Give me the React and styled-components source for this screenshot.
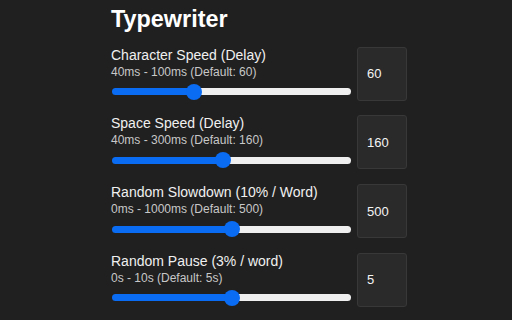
import React, { useState } from 'react';
import styled, { createGlobalStyle } from 'styled-components';

const GlobalStyle = createGlobalStyle`
  html, body {
    margin: 0;
    padding: 0;
    background: #202020;
  }
  body {
    font-family: "Liberation Sans", Arial, sans-serif;
    color: #f0f0f0;
  }
`;

const Page = styled.div`
  width: 296px;
  margin-left: 111px;
  padding-top: 6px;
  display: flex;
  flex-direction: column;
  gap: 14.7px;
`;

const Title = styled.h1`
  margin: 0;
  font-size: 23.4px;
  line-height: 26px;
  font-weight: bold;
  color: #ffffff;
`;

const Row = styled.div`
  display: grid;
  grid-template-columns: 1fr 50px;
  column-gap: 6px;
  height: 54px;
`;

const Info = styled.div`
  display: flex;
  flex-direction: column;
`;

const Label = styled.div`
  font-size: 14px;
  line-height: 16px;
  color: #f0f0f0;
`;

const Range = styled.div`
  margin-top: 2px;
  font-size: 12px;
  line-height: 14px;
  color: #c8c8c8;
`;

const Slider = styled.input.attrs({ type: 'range' })`
  -webkit-appearance: none;
  appearance: none;
  margin: 5px 0 0 1px;
  width: 239px;
  height: 16px;
  background: transparent;
  outline: none;

  &::-webkit-slider-runnable-track {
    height: 7px;
    border-radius: 4px;
    background: var(--track);
  }

  &::-webkit-slider-thumb {
    -webkit-appearance: none;
    appearance: none;
    width: 16px;
    height: 16px;
    margin-top: -4.5px;
    border-radius: 50%;
    background: #0a6cf2;
    border: none;
  }
`;

const ValueBox = styled.input`
  box-sizing: border-box;
  width: 50px;
  height: 54px;
  padding: 0 0 0 9px;
  background: #2a2a2a;
  border: 1px solid #383838;
  border-radius: 3px;
  color: #f4f4f4;
  font-family: "Liberation Sans", Arial, sans-serif;
  font-size: 13px;
  outline: none;
`;

const settings = [
  { key: 'char', label: 'Character Speed (Delay)', range: '40ms - 100ms (Default: 60)', min: 40, max: 100, value: 60 },
  { key: 'space', label: 'Space Speed (Delay)', range: '40ms - 300ms (Default: 160)', min: 40, max: 300, value: 160 },
  { key: 'slow', label: 'Random Slowdown (10% / Word)', range: '0ms - 1000ms (Default: 500)', min: 0, max: 1000, value: 500 },
  { key: 'pause', label: 'Random Pause (3% / word)', range: '0s - 10s (Default: 5s)', min: 0, max: 10, value: 5 },
];

const SettingRow = ({ setting, value, onChange }) => {
  const pct = ((value - setting.min) / (setting.max - setting.min)) * 100;
  // fill stops under the thumb centre (thumb is 16px wide)
  const stop = `calc(8px + ${pct / 100} * (100% - 16px))`;
  const track = `linear-gradient(to right, #0a6cf2 0, #0a6cf2 ${stop}, #efefef ${stop}, #efefef 100%)`;
  return (
    <Row>
      <Info>
        <Label>{setting.label}</Label>
        <Range>{setting.range}</Range>
        <Slider
          min={setting.min}
          max={setting.max}
          value={value}
          style={{ '--track': track }}
          onChange={(e) => onChange(Number(e.target.value))}
        />
      </Info>
      <ValueBox
        value={value}
        onChange={(e) => onChange(Number(e.target.value) || 0)}
      />
    </Row>
  );
};

export default function App() {
  const [values, setValues] = useState(
    Object.fromEntries(settings.map((s) => [s.key, s.value]))
  );

  return (
    <>
      <GlobalStyle />
      <Page>
        <Title>Typewriter</Title>
        {settings.map((s) => (
          <SettingRow
            key={s.key}
            setting={s}
            value={values[s.key]}
            onChange={(v) => setValues({ ...values, [s.key]: v })}
          />
        ))}
      </Page>
    </>
  );
}
